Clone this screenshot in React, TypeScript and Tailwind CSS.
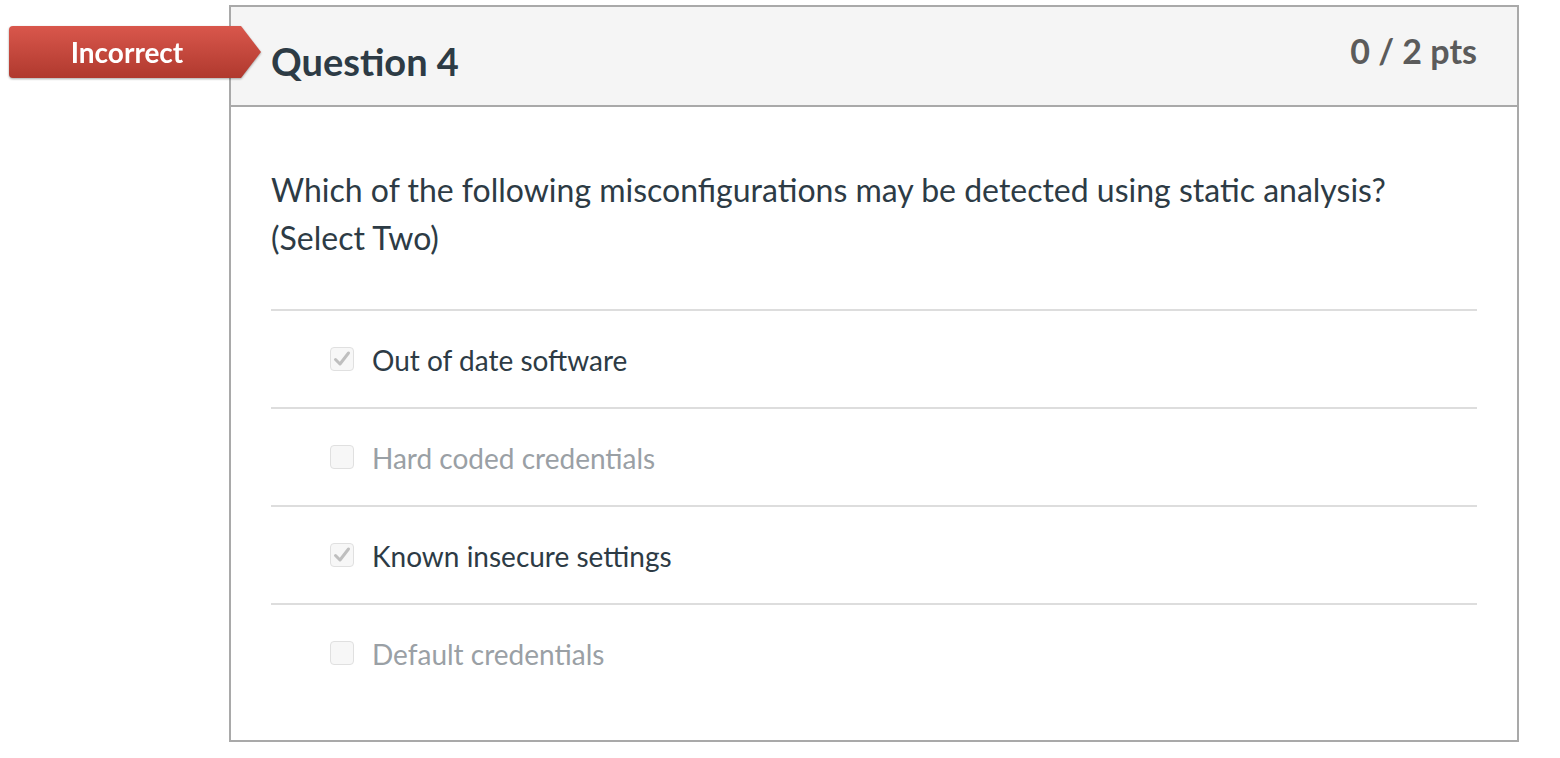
import React from "react";

const answers = [
  { text: "Out of date software", checked: true },
  { text: "Hard coded credentials", checked: false },
  { text: "Known insecure settings", checked: true },
  { text: "Default credentials", checked: false },
];

function Box({ checked }: { checked: boolean }) {
  return (
    <div className="mt-[5px] flex h-[24px] w-[24px] shrink-0 items-center justify-center rounded-[4px] border border-[#e0e0e0] bg-[#f7f7f7]">
      {checked && (
        <svg width="22" height="22" viewBox="0 0 22 22" fill="none">
          <path d="M4.5 11.5 L9 16 L17.5 5" stroke="#bfbfbf" strokeWidth="3" strokeLinecap="round" strokeLinejoin="round" />
        </svg>
      )}
    </div>
  );
}

export default function App() {
  return (
    <div className="relative h-[758px] w-[1560px] bg-white pt-[5px] font-['Lato','Liberation_Sans',sans-serif]">
      <div className="ml-[229px] w-[1290px] border-2 border-[#a9a9a9]">
        <div className="flex h-[100px] items-start justify-between border-b-2 border-[#a9a9a9] bg-[#f5f5f5] pl-[40px] pr-[40px]">
          <div className="mt-[30px] text-[38px] font-bold leading-[48px] text-[#2d3b45]">Question 4</div>
          <div className="mt-[24px] text-[34px] font-bold leading-[40px] text-[#5b5b5b]">0 / 2 pts</div>
        </div>
        <div className="px-[40px] pb-[39px] pt-[59px]">
          <div className="text-[32px] leading-[48px] text-[#2d3b45]">
            Which of the following misconfigurations may be detected using static analysis?
            <br />
            (Select Two)
          </div>
          <div className="mt-[47px]">
            {answers.map((a) => (
              <div key={a.text} className="flex h-[98px] items-start gap-[18px] border-t-2 border-[#dddddd] pl-[59px] pt-[31px]">
                <Box checked={a.checked} />
                <div className={`text-[28px] leading-[36px] ${a.checked ? "text-[#2d3b45]" : "text-[#9aa0a5]"}`}>{a.text}</div>
              </div>
            ))}
          </div>
        </div>
      </div>
      <div className="absolute left-[9px] top-[26px] h-[52px] w-[252px] drop-shadow-[0_1px_1px_rgba(0,0,0,0.35)]">
        <div className="flex h-full w-full items-center justify-center rounded-l-[4px] bg-gradient-to-b from-[#d9574c] to-[#b0392e] pr-[16px] text-[28px] font-bold text-white [clip-path:polygon(0_0,calc(100%_-_20px)_0,100%_50%,calc(100%_-_20px)_100%,0_100%)]">
          Incorrect
        </div>
      </div>
    </div>
  );
}
